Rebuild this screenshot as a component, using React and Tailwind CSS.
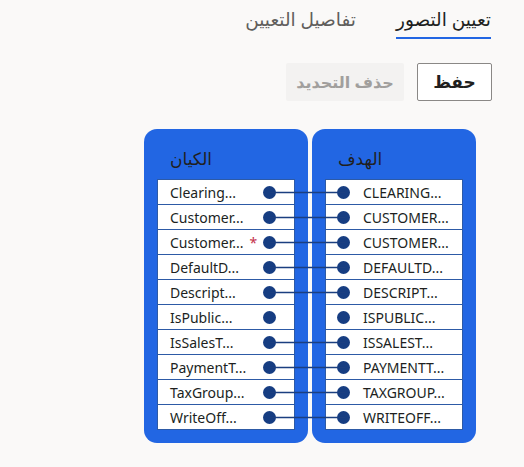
import React from 'react';

const rows = [
  { src: 'Clearing...', dst: 'CLEARING...', linked: true },
  { src: 'Customer...', dst: 'CUSTOMER...', linked: true },
  { src: 'Customer...', dst: 'CUSTOMER...', linked: true, required: true },
  { src: 'DefaultD...', dst: 'DEFAULTD...', linked: true },
  { src: 'Descript...', dst: 'DESCRIPT...', linked: true },
  { src: 'IsPublic...', dst: 'ISPUBLIC...', linked: false },
  { src: 'IsSalesT...', dst: 'ISSALEST...', linked: true },
  { src: 'PaymentT...', dst: 'PAYMENTT...', linked: true },
  { src: 'TaxGroup...', dst: 'TAXGROUP...', linked: true },
  { src: 'WriteOff...', dst: 'WRITEOFF...', linked: true },
];

const Dot = () => <span className="block w-[13px] h-[13px] rounded-full bg-[#163d82]" />;

const Panel = ({ title, side }) => (
  <div className="w-[164px] h-[314px] rounded-[13px] bg-[#2266e3] pt-[14px] px-[13px]">
    <div className="h-[36px] pl-[13px] text-[17px] text-[#201f1e] leading-[32px]" dir="rtl" style={{ textAlign: 'left' }}>
      {title}
    </div>
    <div className="border border-[#2d5aa6] bg-[#2d5aa6] flex flex-col gap-px">
      {rows.map((r, i) => (
        <div key={i} className="h-[24px] bg-white flex items-center text-[14px] text-[#201f1e]">
          {side === 'left' ? (
            <>
              <span className="pl-[12px] flex-1 truncate">
                {r.src}
                {r.required && <span className="text-[#c4314b] ml-[6px]">*</span>}
              </span>
              <span className="pr-[18px]"><Dot /></span>
            </>
          ) : (
            <>
              <span className="pl-[11px]"><Dot /></span>
              <span className="pl-[13px] flex-1 truncate">{r.dst}</span>
            </>
          )}
        </div>
      ))}
    </div>
  </div>
);

const App = () => {
  return (
    <div className="min-h-screen bg-[#faf9f8]" style={{ fontFamily: '"Noto Sans", "DejaVu Sans", sans-serif' }}>
      <div dir="rtl" className="flex gap-[40px] pr-[33px] h-[39px]">
        <div className="border-b-2 border-[#2266e3] pt-[5px] text-[18.5px] text-[#201f1e]">تعيين التصور</div>
        <div className="pt-[5px] text-[18.5px] text-[#605e5c]">تفاصيل التعيين</div>
      </div>
      <div dir="rtl" className="flex gap-[13px] pr-[32px] mt-[24px]">
        <button className="w-[75px] h-[38px] border border-[#8a8886] rounded-[2px] bg-white text-[17px] font-bold text-[#201f1e]">
          حفظ
        </button>
        <button disabled className="w-[118px] h-[38px] rounded-[2px] bg-[#f3f2f1] text-[16px] font-semibold text-[#a19f9d]">
          حذف التحديد
        </button>
      </div>
      <div className="relative ml-[144px] mt-[28px] flex gap-[4px] w-fit">
        <Panel title="الكيان" side="left" />
        <Panel title="الهدف" side="right" />
        <svg className="absolute inset-0 pointer-events-none" width="332" height="314">
          {rows.map((r, i) =>
            r.linked ? (
              <line key={i} x1="126" x2="201" y1={63.5 + 25 * i} y2={63.5 + 25 * i} stroke="#1b3f80" strokeWidth="1.5" />
            ) : null
          )}
        </svg>
      </div>
    </div>
  );
};

export default App;
